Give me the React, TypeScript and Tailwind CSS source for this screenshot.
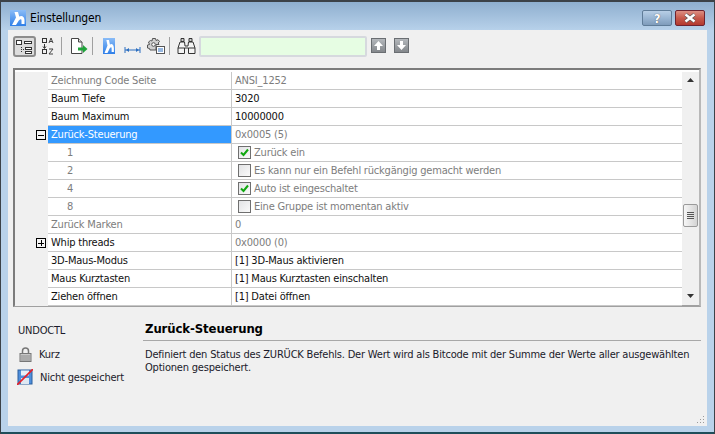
import type { ReactNode } from 'react';

const rows: { name: string; value: string; kind?: 'gray' | 'selected' | 'sub' | 'normal'; box?: 'minus' | 'plus'; check?: boolean; valueGray?: boolean }[] = [
  { name: 'Zeichnung Code Seite', value: 'ANSI_1252', kind: 'gray', valueGray: true },
  { name: 'Baum Tiefe', value: '3020' },
  { name: 'Baum Maximum', value: '10000000' },
  { name: 'Zurück-Steuerung', value: '0x0005 (5)', kind: 'selected', box: 'minus', valueGray: true },
  { name: '1', value: 'Zurück ein', kind: 'sub', check: true, valueGray: true },
  { name: '2', value: 'Es kann nur ein Befehl rückgängig gemacht werden', kind: 'sub', check: false, valueGray: true },
  { name: '4', value: 'Auto ist eingeschaltet', kind: 'sub', check: true, valueGray: true },
  { name: '8', value: 'Eine Gruppe ist momentan aktiv', kind: 'sub', check: false, valueGray: true },
  { name: 'Zurück Marken', value: '0', kind: 'gray', valueGray: true },
  { name: 'Whip threads', value: '0x0000 (0)', box: 'plus', valueGray: true },
  { name: '3D-Maus-Modus', value: '[1] 3D-Maus aktivieren' },
  { name: 'Maus Kurztasten', value: '[1] Maus Kurztasten einschalten' },
  { name: 'Ziehen öffnen', value: '[1] Datei öffnen' },
];

function Logo({ width, height }: { width: number; height: number }) {
  return (
    <svg width={width} height={height} viewBox="0 0 16 16" preserveAspectRatio="none">
      <defs>
        <linearGradient id="lg" x1="0" y1="0" x2="0" y2="1">
          <stop offset="0" stopColor="#8abcf7" />
          <stop offset="1" stopColor="#2f7fe8" />
        </linearGradient>
      </defs>
      <rect width="16" height="16" fill="url(#lg)" />
      <path d="M2 15 L6 7.500 L4.500 2 L8 2 L9.200 6.500 Q11 5.500 12.500 6.200 Q14.500 7.200 14.500 10 L14.500 14 L11.500 14 L11.500 10.500 Q11.500 8.800 10 9.600 L8.800 10.500 L6 15 Z" fill="#fff" />
    </svg>
  );
}

function Separator() {
  return <div className="w-px h-[18px] bg-[#a0a0a0]" />;
}

function ToolIcon({ width, children }: { width: number; children: ReactNode }) {
  return (
    <svg width={width} height={18} viewBox={`0 0 ${width} 18`} className="shrink-0">
      {children}
    </svg>
  );
}

function ArrowBtn({ down }: { down?: boolean }) {
  return (
    <div className="w-[15px] h-[15px] border border-[#6a6e72] bg-gradient-to-b from-[#b4b8bc] to-[#84888c] flex items-center justify-center">
      <svg width="11" height="11" viewBox="0 0 11 11">
        <path d={down ? 'M4 1h3v4h3L5.500 10 1 5h3z' : 'M5.500 1 10 6H7v4H4V6H1z'} fill="#fff" />
      </svg>
    </div>
  );
}

function TreeBox({ plus }: { plus?: boolean }) {
  return (
    <div className="w-[10px] h-[10px] border border-black bg-[#f4f4f4] flex items-center justify-center relative">
      <div className="w-[6px] h-px bg-black" />
      {plus && <div className="absolute w-px h-[6px] bg-black" />}
    </div>
  );
}

function CheckBox({ on }: { on: boolean }) {
  return (
    <div className="w-[13px] h-[13px] border border-[#6f6f6f] bg-gradient-to-br from-[#e2e3e5] to-[#fafafa] flex items-center justify-center shrink-0">
      {on && (
        <svg width="11" height="11" viewBox="0 0 11 11">
          <path d="M2 5.500 4.500 8 9 2.500" fill="none" stroke="#10a810" strokeWidth="2" />
        </svg>
      )}
    </div>
  );
}

export default function App() {
  return (
    <div className="w-[715px] h-[434px] overflow-hidden flex flex-col bg-[#b9d2ea] border-x border-x-[#3c4248] text-[11px] leading-none tracking-[-0.2px] text-[#101010] font-['DejaVu_Sans',sans-serif] [font-stretch:condensed]">
      {/* Title bar */}
      <div className="h-[30px] shrink-0 border-t-2 border-t-[#3c4248] bg-gradient-to-b from-[#8fafcf] to-[#b7d1ea] flex items-start pl-[9px] pr-[9px]">
        <div className="mt-[8px] flex items-center gap-[4px]">
          <Logo width={16} height={16} />
          <span className="text-[12px] tracking-[-0.15px] text-black">Einstellungen</span>
        </div>
        <div className="ml-auto mt-[8px] flex gap-[3px]">
          <div className="w-[30px] h-[16px] rounded-[2px] border border-[#5f7c98] bg-gradient-to-b from-[#b8cfe6] via-[#9ab6d3] to-[#7f9cbb] flex items-center justify-center">
            <span className="text-white font-bold text-[13px] [text-shadow:0_0_1px_#333]">?</span>
          </div>
          <div className="w-[30px] h-[16px] rounded-[2px] border border-[#6e2430] bg-gradient-to-b from-[#dc8f83] via-[#c75a4c] to-[#b3392f] flex items-center justify-center">
            <svg width="14" height="10" viewBox="0 0 14 10">
              <path d="M2.500 1.500 11.500 8.500M11.500 1.500 2.500 8.500" stroke="#555" strokeWidth="3.600" />
              <path d="M2.500 1.500 11.500 8.500M11.500 1.500 2.500 8.500" stroke="#fff" strokeWidth="2.400" />
            </svg>
          </div>
        </div>
      </div>

      {/* Window body */}
      <div className="flex-1 min-h-0 mx-[7px] bg-[#f0f0f0] flex flex-col">
        {/* Toolbar */}
        <div className="h-[38px] shrink-0 flex items-start pl-[5px] pt-[6px]">
          <div className="w-[23px] h-[21px] rounded-[3px] border-2 border-[#8c8c8c] bg-[#dcdcdc] flex items-center justify-center">
            <ToolIcon width={19}>
              <rect x="1.500" y="2.500" width="5" height="4" fill="#fff" stroke="#333" />
              <rect x="9.500" y="3.500" width="7" height="2" fill="#fff" stroke="#333" />
              <path d="M6 9.500h1M6 11.500h1M6 13.500h1M8 11.500h1" stroke="#333" />
              <rect x="10.500" y="9.500" width="6" height="2" fill="#fff" stroke="#333" />
              <rect x="10.500" y="13.500" width="6" height="2" fill="#fff" stroke="#333" />
            </ToolIcon>
          </div>
          <div className="ml-[5px] mt-[1px]">
            <ToolIcon width={13}>
              <rect x="1.500" y="1.500" width="4" height="4" fill="none" stroke="#333" />
              <path d="M3.500 7v4M2 9.500l1.500 2 1.500-2" fill="none" stroke="#333" />
              <rect x="1.500" y="12.500" width="4" height="4" fill="none" stroke="#333" />
              <path d="M8 6l2-5 2 5M9 4.500h2M8 12h4l-4 5h4" fill="none" stroke="#444" />
            </ToolIcon>
          </div>
          <div className="ml-[7px] mt-[1px]"><Separator /></div>
          <div className="ml-[8px] mt-[1px]">
            <ToolIcon width={18}>
              <path d="M1.500 1.500h7l3.500 3.500v11.500h-10.500z" fill="#fff" stroke="#444" />
              <path d="M8.500 1.500v3.500h3.500" fill="#ddd" stroke="#444" />
              <path d="M8 10.500h5v-2.500l4.500 4-4.500 4v-2.500h-5z" fill="#1fa33a" />
            </ToolIcon>
          </div>
          <div className="ml-[4px] mt-[1px]"><Separator /></div>
          <div className="ml-[10px] mt-[2px]"><Logo width={12} height={16} /></div>
          <div className="ml-[9px] mt-[1px]">
            <ToolIcon width={17}>
              <path d="M1 10v6M16 10v6M1 13h15" stroke="#2c6fc0" fill="none" />
              <path d="M2 13l3-2v4zM15 13l-3-2v4z" fill="#2c6fc0" />
            </ToolIcon>
          </div>
          <div className="ml-[6px] mt-[1px]">
            <ToolIcon width={18}>
              <path d="M5.500 1.500h3l.5 2 2-.8 1.500 1.800-1.300 1.500.8 1.500H9v5.500H3l-.500-1.500-2-.500V8l2-.5L1.500 5l2-1.500L5 4z" fill="#d0d0d0" stroke="#555" />
              <circle cx="6.500" cy="7.500" r="1.800" fill="#fff" stroke="#555" />
              <rect x="9.500" y="9.500" width="8" height="7" fill="#fff" stroke="#555" />
              <path d="M11 12h5M11 14h5" stroke="#2c6fc0" />
            </ToolIcon>
          </div>
          <div className="ml-[4px] mt-[1px]"><Separator /></div>
          <div className="ml-[7px] mt-[1px]">
            <ToolIcon width={19}>
              <path d="M4 1.500h3v3h-3zM12 1.500h3v3h-3z" fill="#ccc" stroke="#333" />
              <path d="M3 5h4.500l.5 4h3l.5-4H16l2 6v5.500h-6.500V11h-4v5.500H1V11z" fill="#f4f4f4" stroke="#333" />
              <path d="M1 11h6.500M11.500 11H18" stroke="#333" />
            </ToolIcon>
          </div>
          <div className="ml-[3px] w-[168px] h-[21px] rounded-[2px] border-2 border-[#d6d9de] bg-[#e6fde3]" />
          <div className="ml-[4px] mt-[2px]"><ArrowBtn /></div>
          <div className="ml-[8px] mt-[2px]"><ArrowBtn down /></div>
        </div>

        {/* Property grid */}
        <div className="ml-[5px] mr-[6px] h-[239px] shrink-0 border-2 border-[#7c7c7c] border-r-[#b8b8b8] border-b-[#a0a0a0] bg-white flex pt-[2px]">
          <div className="flex-1 min-w-0 flex flex-col">
            {rows.map((row) => (
              <div key={row.name} className="h-[18px] shrink-0 flex">
                <div className="w-[33px] shrink-0 bg-[#f0f0f0] flex items-center justify-end pr-[2px]">
                  {row.box && <TreeBox plus={row.box === 'plus'} />}
                </div>
                <div
                  className={`w-[184px] shrink-0 border-r border-r-[#c8c8c8] border-b border-b-[#c8c8c8] flex items-center ${row.kind === 'sub' ? 'pl-[19px]' : 'pl-[3px]'} ${row.kind === 'selected' ? 'bg-[#3399ff] text-white' : ''} ${row.kind === 'gray' || row.kind === 'sub' ? 'text-[#7d7d7d]' : ''}`}
                >
                  {row.name}
                </div>
                <div className={`flex-1 min-w-0 border-b border-b-[#c8c8c8] flex items-center ${row.check === undefined ? 'pl-[3px]' : 'pl-[6px] gap-[3px]'} ${row.valueGray ? 'text-[#7d7d7d]' : ''}`}>
                  {row.check !== undefined && <CheckBox on={row.check} />}
                  <span>{row.value}</span>
                </div>
              </div>
            ))}
          </div>
          {/* Scrollbar */}
          <div className="w-[17px] shrink-0 bg-[#f0f0f0] flex flex-col items-center">
            <div className="h-[17px] flex items-center justify-center shrink-0">
              <svg width="7" height="5" viewBox="0 0 7 5"><path d="M3.500 0 7 4H0z" fill="#333" /></svg>
            </div>
            <div className="h-[115px] shrink-0" />
            <div className="w-[15px] h-[23px] shrink-0 rounded-[2px] border border-[#9a9a9a] bg-gradient-to-r from-[#f6f6f6] to-[#d4d4d4] flex flex-col items-center justify-center gap-px">
              <div className="w-[7px] h-px bg-[#555]" />
              <div className="w-[7px] h-px bg-[#555]" />
              <div className="w-[7px] h-px bg-[#555]" />
              <div className="w-[7px] h-px bg-[#555]" />
            </div>
            <div className="flex-1" />
            <div className="h-[17px] flex items-center justify-center shrink-0">
              <svg width="7" height="5" viewBox="0 0 7 5"><path d="M0 0h7L3.500 4z" fill="#333" /></svg>
            </div>
          </div>
        </div>

        {/* Details */}
        <div className="flex-1 min-h-0 flex relative">
          <div className="w-[135px] shrink-0 pl-[10px] pt-[17px] flex flex-col text-[#1a1a2a]">
            <div className="h-[12px] flex items-center">UNDOCTL</div>
            <div className="mt-[11px] h-[15px] flex items-center">
              <svg width="13" height="15" viewBox="0 0 13 15" className="ml-px">
                <path d="M3.500 7V4a3 3 0 0 1 6 0v3" fill="none" stroke="#777" strokeWidth="1.500" />
                <rect x="1" y="6.500" width="11" height="8" fill="#c8c8c8" stroke="#777" />
                <path d="M2 9h9M2 11h9M2 13h9" stroke="#8e8e8e" />
              </svg>
              <span className="ml-[7px]">Kurz</span>
            </div>
            <div className="mt-[7px] h-[16px] flex items-center">
              <svg width="16" height="16" viewBox="0 0 16 16" className="-ml-px">
                <rect x="1" y="1" width="14" height="14" fill="#4f8fdc" stroke="#2a5f9e" />
                <rect x="4" y="1.500" width="8" height="5" fill="#e6eef8" />
                <rect x="4" y="9" width="8" height="6" fill="#dfe8f2" />
                <path d="M0 16 16 0" stroke="#e8202a" strokeWidth="1.600" />
              </svg>
              <span className="ml-[7px]">Nicht gespeichert</span>
            </div>
          </div>
          <div className="flex-1 min-w-0 pr-[6px] pt-[15px]">
            <div className="h-[19px] pl-[2px] border-b border-b-[#a8a8a8] font-bold text-[13px] tracking-[-0.1px] text-black">Zurück-Steuerung</div>
            <div className="pl-[2px] pt-[7px] pr-[6px] leading-[13px] text-[#1a1a2a]">
              Definiert den Status des ZURÜCK Befehls. Der Wert wird als Bitcode mit der Summe der Werte aller ausgewählten Optionen gespeichert.
            </div>
          </div>
          {/* Resize grip */}
          <svg width="10" height="10" viewBox="0 0 10 10" className="absolute right-[1px] bottom-[1px]">
            <path d="M7 1h1v1H7zM7 4h1v1H7zM4 4h1v1H4zM7 7h1v1H7zM4 7h1v1H4zM1 7h1v1H1z" fill="#9a9a9a" />
          </svg>
        </div>
      </div>

      {/* Bottom frame */}
      <div className="h-[8px] shrink-0 bg-[#b9d2ea] border-b-2 border-b-[#1f4e5a]" />
    </div>
  );
}
